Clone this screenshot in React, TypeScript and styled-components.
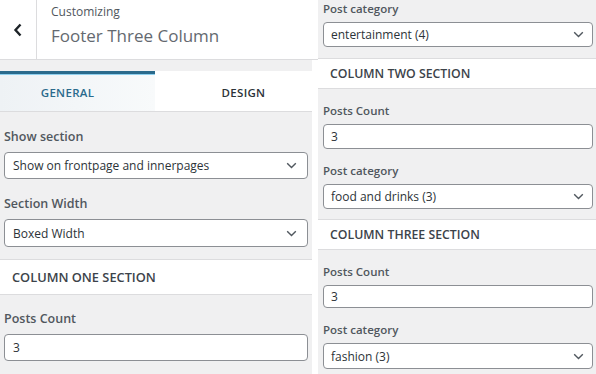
import React from 'react';
import styled, { createGlobalStyle, css } from 'styled-components';

const GlobalStyle = createGlobalStyle`
  html, body {
    margin: 0;
    padding: 0;
    background: #ffffff;
  }
  body {
    font-family: "Open Sans", "Noto Sans", sans-serif;
    color: #2c3338;
  }
`;

const Page = styled.div`
  width: 596px;
  height: 374px;
  display: flex;
  gap: 6px;
  overflow: hidden;
  background: #ffffff;
`;

const Panel = styled.div<{ $width: number }>`
  width: ${(p) => p.$width}px;
  flex-shrink: 0;
  height: 100%;
  background: #f0f0f1;
  display: flex;
  flex-direction: column;
`;

const Header = styled.div`
  height: 59px;
  background: #fff;
  border-bottom: 1px solid #dcdcde;
  display: flex;
  margin-right: -6px;
`;

const BackButton = styled.div`
  width: 36px;
  border-right: 1px solid #dcdcde;
  display: flex;
  align-items: center;
  justify-content: center;
  color: #1d2327;
`;

const Titles = styled.div`
  padding: 4px 0 0 14px;
  display: flex;
  flex-direction: column;
`;

const Small = styled.span`
  font-size: 12px;
  line-height: 16px;
  color: #50575e;
`;

const Big = styled.span`
  font-size: 17px;
  line-height: 24px;
  margin-top: 4px;
  color: #646970;
`;

const Tabs = styled.div`
  margin-top: 11px;
  display: grid;
  grid-template-columns: 155px 1fr;
  background: #fff;
  border-bottom: 1px solid #dcdcde;
`;

const Tab = styled.div<{ $active?: boolean; $shift: number }>`
  height: 37px;
  border-top: 3px solid transparent;
  display: flex;
  align-items: center;
  justify-content: center;
  padding-left: ${(p) => Math.max(p.$shift, 0)}px;
  padding-right: ${(p) => Math.max(-p.$shift, 0)}px;
  font-size: 11.5px;
  font-weight: 600;
  letter-spacing: 0.3px;
  color: #2c3338;
  ${(p) =>
    p.$active &&
    css`
      border-top-color: #2a6a8c;
      box-shadow: inset 0 1px 0 #8fd0ee;
      color: #2a6a8c;
      background: linear-gradient(90deg, #eef2f5 0%, #f8fafb 100%);
    `}
`;

const Body = styled.div<{ $small?: boolean }>`
  display: flex;
  flex-direction: column;
  padding: ${(p) => (p.$small ? '1px 0 0' : '16px 0 0')};
`;

const Field = styled.div<{ $small?: boolean; $gap?: number }>`
  display: flex;
  flex-direction: column;
  padding: ${(p) => (p.$small ? '0 3px 0 5px' : '0 4px')};
  margin-bottom: ${(p) => p.$gap ?? 0}px;
`;

const Label = styled.div<{ $small?: boolean }>`
  font-size: ${(p) => (p.$small ? 11.5 : 12.5)}px;
  line-height: ${(p) => (p.$small ? 16 : 18)}px;
  font-weight: 600;
  color: #50575e;
  margin-bottom: ${(p) => (p.$small ? 5 : 6)}px;
`;

const Box = styled.div<{ $small?: boolean; $h: number }>`
  height: ${(p) => p.$h}px;
  box-sizing: border-box;
  background: #fff;
  border: 1px solid #8c8f94;
  border-radius: 4px;
  display: flex;
  align-items: center;
  justify-content: space-between;
  padding: ${(p) => (p.$small ? '0 8px 0 7px' : '0 10px 0 8px')};
  font-size: 12px;
  color: #2c3338;
`;

const SectionBand = styled.div<{ $small?: boolean }>`
  height: ${(p) => (p.$small ? 29 : 34)}px;
  background: #fff;
  border-top: 1px solid #dcdcde;
  border-bottom: 1px solid #dcdcde;
  display: flex;
  align-items: center;
  padding-left: 12px;
  font-size: ${(p) => (p.$small ? 12.3 : 12.8)}px;
  font-weight: 600;
  color: #3c434a;
  margin-bottom: ${(p) => (p.$small ? 14 : 15)}px;
`;

const Chevron = () => (
  <svg width="11" height="7" viewBox="0 0 11 7" fill="none">
    <path d="M1.2 1.2l4.3 4.3 4.3-4.3" stroke="#50575e" strokeWidth="1.4" />
  </svg>
);

const Back = () => (
  <svg width="10" height="14" viewBox="0 0 10 14" fill="none">
    <path d="M7.5 1.5L2.5 7l5 5.5" stroke="#1d2327" strokeWidth="2.4" />
  </svg>
);

type Ctl = { label: string; value: string; select?: boolean; h: number; gap: number };

const Control: React.FC<Ctl & { small?: boolean }> = ({ label, value, select, h, gap, small }) => (
  <Field $small={small} $gap={gap}>
    <Label $small={small}>{label}</Label>
    <Box $small={small} $h={h}>
      <span>{value}</span>
      {select && <Chevron />}
    </Box>
  </Field>
);

const App: React.FC = () => (
  <>
    <GlobalStyle />
    <Page>
      <Panel $width={312}>
        <Header>
          <BackButton>
            <Back />
          </BackButton>
          <Titles>
            <Small>Customizing</Small>
            <Big>Footer Three Column</Big>
          </Titles>
        </Header>
        <Tabs>
          <Tab $active $shift={-20}>GENERAL</Tab>
          <Tab $shift={20}>DESIGN</Tab>
        </Tabs>
        <Body>
          <Control label="Show section" value="Show on frontpage and innerpages" select h={27} gap={16} />
          <Control label="Section Width" value="Boxed Width" select h={28} gap={12} />
          <SectionBand>COLUMN ONE SECTION</SectionBand>
          <Control label="Posts Count" value="3" h={27} gap={0} />
        </Body>
      </Panel>
      <Panel $width={278}>
        <Body $small>
          <Control small label="Post category" value="entertainment (4)" select h={25} gap={11} />
          <SectionBand $small>COLUMN TWO SECTION</SectionBand>
          <Control small label="Posts Count" value="3" h={25} gap={14} />
          <Control small label="Post category" value="food and drinks (3)" select h={25} gap={10} />
          <SectionBand $small>COLUMN THREE SECTION</SectionBand>
          <Control small label="Posts Count" value="3" h={23} gap={14} />
          <Control small label="Post category" value="fashion (3)" select h={26} gap={0} />
        </Body>
      </Panel>
    </Page>
  </>
);

export default App;
